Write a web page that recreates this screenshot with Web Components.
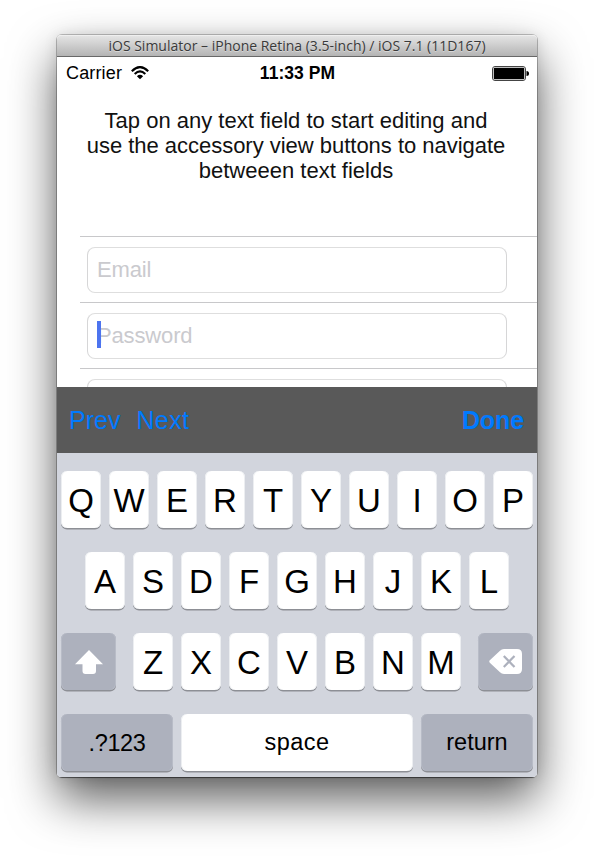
<!DOCTYPE html>
<html lang="en">
<head>
<meta charset="utf-8">
<title>iOS Simulator</title>
<style>
html,body{margin:0;background:#fff}
body{width:594px;height:856px;overflow:hidden;font-family:"Liberation Sans",Arial,sans-serif;color:#111}
</style>
</head>
<body>
<sim-window heading="iOS Simulator – iPhone Retina (3.5-inch) / iOS 7.1 (11D167)">
  <status-bar></status-bar>
  <intro-text></intro-text>
  <field-list>
    <text-field label="Email"></text-field>
    <text-field label="Password" focused></text-field>
    <text-field></text-field>
  </field-list>
  <accessory-bar></accessory-bar>
  <key-board></key-board>
</sim-window>
<script>
function define(name, render) {
  customElements.define(name, class extends HTMLElement {
    constructor() {
      super();
      this.attachShadow({mode: 'open'});
    }
    connectedCallback() {
      const t = document.createElement('template');
      t.innerHTML = render(this);
      this.shadowRoot.replaceChildren(t.content.cloneNode(true));
    }
  });
}

define('sim-window', el => `
<style>
:host{display:block;padding:35px 57px 0}
.win{width:480px;height:742px;border-radius:5px;display:flex;flex-direction:column;
 box-shadow:0 0 0 1px rgba(0,0,0,.22),0 1px 1px rgba(0,0,0,.4),0 0 14px rgba(0,0,0,.1),0 22px 48px rgba(0,0,0,.64)}
.bar{flex:none;height:21px;border-bottom:1px solid #686868;border-radius:4px 4px 0 0;background:linear-gradient(#e6e6e6,#b4b4b4);
 box-shadow:inset 0 1px #efefef;display:flex;justify-content:center;align-items:center;
 font:14px/21px "Open Sans",sans-serif;color:#3a3a3a;white-space:pre}
.title{letter-spacing:0;text-shadow:0 1px rgba(255,255,255,.4)}
.screen{height:720px;background:#fff;border-radius:0 0 4px 4px;overflow:hidden;display:flex;flex-direction:column}
</style>
<div class="win"><div class="bar"><span class="title">${el.getAttribute('heading')}</span></div>
<div class="screen"><slot></slot></div></div>`);

define('status-bar', () => `
<style>
:host{flex:none;display:grid;grid-template-columns:1fr auto 1fr;align-items:center;height:32px;padding:0 8px 0 9px;color:#000}
.left{display:flex;align-items:center;gap:9px;font-size:18px;letter-spacing:.15px}
.time{font-weight:bold;font-size:17.5px;letter-spacing:.05px}
.right{display:flex;justify-content:flex-end}
svg{display:block}
</style>
<div class="left"><span>Carrier</span>
<svg width="18" height="14" viewBox="0 0 18 14"><g fill="none" stroke="#000" stroke-width="2.1"><path d="M.8 5.2Q9-3 17.2 5.2"/><path d="M3.7 8.1Q9 2.8 14.3 8.1"/></g><path d="M5.9 10.2Q9 7.4 12.1 10.2L9 13.2Z"/></svg></div>
<span class="time">11:33 PM</span>
<div class="right"><svg width="37" height="15" viewBox="0 0 37 15"><rect x=".5" y=".5" width="33" height="14" rx="2.5" fill="#fff" stroke="#444"/><rect x="1.75" y="1.75" width="30.5" height="11.5" rx="1"/><path d="M34.5 5Q37 5 37 7.5T34.5 10Z"/></svg></div>`);

define('intro-text', () => `
<style>
:host{flex:none;display:flex;flex-direction:column;align-items:center;height:128px;padding-top:19px;font-size:22px;line-height:25px;white-space:pre}
.b{letter-spacing:-.02px}
span{margin-right:2px}
</style>
<span>Tap on any text field to start editing and</span>
<span class="b">use the accessory view buttons to navigate</span>
<span>betweeen text fields</span>`);

define('field-list', () => `
<style>
:host{height:151px;overflow:hidden;display:flex;flex-direction:column;flex:none}
</style><slot></slot>`);

define('text-field', el => `
<style>
:host{flex:none;display:block;height:66px;box-sizing:border-box;margin-left:23px;padding:10px 30px 0 7px;border-top:1px solid #c8c8ca}
.box{box-sizing:border-box;height:46px;border:1px solid #d6d6d7;border-top-color:#dedede;border-bottom-color:#dedede;border-radius:8px;display:flex;align-items:center;padding-left:9px;position:relative;
 font-size:22px;letter-spacing:-.15px;color:#cacace}
.caret{position:absolute;left:9px;top:7px;width:4px;height:27px;background:#4d74ef}
</style>
<div class="box"><span>${el.getAttribute('label') || ''}</span>${el.hasAttribute('focused') ? '<i class="caret"></i>' : ''}</div>`);

define('accessory-bar', () => `
<style>
:host{flex:none;display:flex;height:66px;box-sizing:border-box;background:#595959;color:#007aff;align-items:center;padding:1px 13px 0 12px;font-size:25px;gap:16px}
.next{letter-spacing:.4px}
.done{margin-left:auto;font-weight:bold;letter-spacing:-.1px}
</style><span>Prev</span><span class="next">Next</span><span class="done">Done</span>`);

define('key-cap', el => `
<style>
:host{--edge:#eceef1;display:flex;justify-content:center;align-items:center;box-sizing:border-box;width:40px;height:57px;border-radius:6px;background:#fff;box-shadow:inset 1px 0 var(--edge),inset -1px 0 var(--edge),0 1.5px 0 #8d8f95;color:#000;font-size:33px;padding-top:2px}
:host([kind]){--edge:#b8bcc7;background:#adb1bd}
:host([wide]){width:55px;padding-top:0}
:host([word]){width:112px;font-size:23.5px;padding-top:0}
:host([space]){width:232px;background:#fff;letter-spacing:.5px}
:host([down]){padding-top:2px;letter-spacing:-.4px}
</style><span><slot></slot></span>`);

define('key-board', () => {
  const row = s => [...s].map(c => `<key-cap>${c}</key-cap>`).join('');
  return `
<style>
:host{flex:1;display:flex;flex-direction:column;gap:24px;padding:18px 4px 0;background:#d2d5dd}
.row{display:flex;justify-content:center;gap:8px}
.sides{justify-content:space-between}
.mid{display:flex;gap:8px}
svg{display:block}
</style>
<div class="row">${row('QWERTYUIOP')}</div>
<div class="row">${row('ASDFGHJKL')}</div>
<div class="row sides"><key-cap kind wide><svg width="28" height="24" viewBox="0 0 28 24"><path fill="#fff" d="M14 0L28 14.2H21V21Q21 24 18 24H10.5Q7.5 24 7.5 21V14.2H0Z"/></svg></key-cap>
<div class="mid">${row('ZXCVBNM')}</div>
<key-cap kind wide><svg width="34" height="25" viewBox="0 0 34 25"><path fill="#fff" d="M11 1.8Q12.6 0 15 0H28Q33 0 33 5V20Q33 25 28 25H15Q12.6 25 11 23.2L.8 13.7Q-.3 12.5.8 11.3Z"/><path d="M14.8 7L25.5 18M25.5 7L14.8 18" stroke="#adb1bd" stroke-width="2.2"/></svg></key-cap></div>
<div class="row"><key-cap kind word down>.?123</key-cap><key-cap word space>space</key-cap><key-cap kind word>return</key-cap></div>`;
});
</script>
</body>
</html>
